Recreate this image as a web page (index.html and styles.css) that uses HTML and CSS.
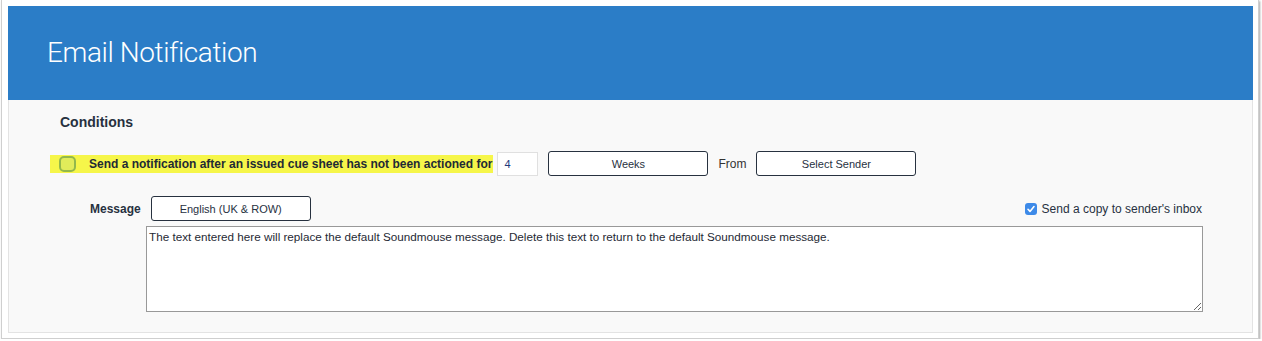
FILE: index.html
```html
<!DOCTYPE html>
<html lang="en">
<head>
    <meta charset="UTF-8">
    <title>Email Notification</title>
    <link rel="stylesheet" href="styles.css">
</head>
<body>
    <div class="window">
        <div class="panel">
            <div class="panel-header">
                <h1 class="panel-title">Email Notification</h1>
            </div>

            <div class="panel-body">
                <div class="section-title">Conditions</div>

                <div class="condition-row">
                    <label class="highlight">
                        <span class="checkbox-ring"></span>
                        <span class="condition-text">Send a notification after an issued cue sheet has not been actioned for</span>
                    </label>
                    <input type="text" class="number-input" value="4">
                    <button class="select-btn">Weeks</button>
                    <span class="from-label">From</span>
                    <button class="select-btn">Select Sender</button>
                </div>

                <div class="message-row">
                    <span class="message-label">Message</span>
                    <button class="select-btn">English (UK &amp; ROW)</button>
                    <label class="copy-option">
                        <span class="checkbox-checked">
                            <svg width="12" height="12" viewBox="0 0 12 12"><path d="M3 6.3 L5 8.4 L9 3.6" fill="none" stroke="#fff" stroke-width="1.6" stroke-linecap="round" stroke-linejoin="round"/></svg>
                        </span>
                        Send a copy to sender's inbox
                    </label>
                </div>

                <textarea class="message-box">The text entered here will replace the default Soundmouse message. Delete this text to return to the default Soundmouse message.</textarea>
            </div>
        </div>
    </div>
</body>
</html>
```

FILE: styles.css
```css
* {
    box-sizing: border-box;
}
body {
    margin: 0;
    padding: 0;
    background-color: #ffffff;
    font-family: 'Liberation Sans', Arial, sans-serif;
    color: #27313f;
}
.window {
    width: 1258px;
    height: 339px;
    margin-left: 1px;
    padding: 6px 0 0 6px;
    background-color: #ffffff;
    border: 1px solid #cfcfcf;
    border-top: none;
    box-shadow: 1px 1px 2px rgba(0,0,0,0.35);
}
.panel {
    width: 1245px;
}
.panel-header {
    height: 94px;
    background-color: #2b7dc7;
    padding: 0 39px 2px;
    display: flex;
    align-items: center;
}
.panel-title {
    margin: 0;
    color: #ffffff;
    font-family: Roboto, 'Liberation Sans', sans-serif;
    font-weight: 300;
    font-size: 28px;
    letter-spacing: -0.4px;
}
.panel-body {
    background-color: #f9f9f9;
    border: 1px solid #e3e3e3;
    border-top: none;
    padding: 14px 50px 20px 41px;
}
.section-title {
    font-size: 14px;
    font-weight: bold;
    line-height: 17px;
    margin-left: 10px;
}
.condition-row {
    display: flex;
    align-items: center;
    height: 25px;
    margin-top: 20px;
}
.highlight {
    display: flex;
    align-items: center;
    height: 18px;
    padding: 0 1px 0 9px;
    background-color: #f6f64a;
}
.checkbox-ring {
    width: 17px;
    height: 16px;
    border: 2px solid #93b84c;
    border-radius: 5px;
    background-color: #e1ec5a;
    margin-right: 13px;
}
.condition-text {
    font-size: 12px;
    font-weight: bold;
    color: #1f2a35;
}
.number-input {
    width: 41px;
    height: 24px;
    margin-left: 4px;
    border: 1px solid #e0e0e0;
    background-color: #ffffff;
    padding: 0 6px;
    font-family: 'Liberation Sans', Arial, sans-serif;
    font-size: 11px;
    color: #1d3a7a;
}
.select-btn {
    width: 160px;
    height: 25px;
    margin-left: 10px;
    border: 1px solid #27313f;
    border-radius: 3px;
    background-color: #ffffff;
    font-family: 'Liberation Sans', Arial, sans-serif;
    font-size: 11px;
    color: #27313f;
    padding: 0;
}
.from-label {
    margin-left: 10px;
    font-size: 12px;
    color: #333;
}
.message-row {
    display: flex;
    align-items: center;
    height: 25px;
    margin-top: 20px;
    padding-left: 40px;
}
.message-label {
    font-size: 12px;
    font-weight: bold;
}
.copy-option {
    margin-left: auto;
    display: flex;
    align-items: center;
    font-size: 12px;
}
.checkbox-checked {
    width: 12px;
    height: 12px;
    border-radius: 3px;
    background-color: #3d8ae8;
    margin-right: 5px;
    display: flex;
}
.message-box {
    display: block;
    width: 1057px;
    height: 86px;
    margin: 5px 0 0 96px;
    border: 1px solid #999;
    background-color: #ffffff;
    padding: 3px 2px;
    font-family: 'Liberation Sans', Arial, sans-serif;
    font-size: 11.7px;
    color: #1f2a35;
    resize: vertical;
}
```
